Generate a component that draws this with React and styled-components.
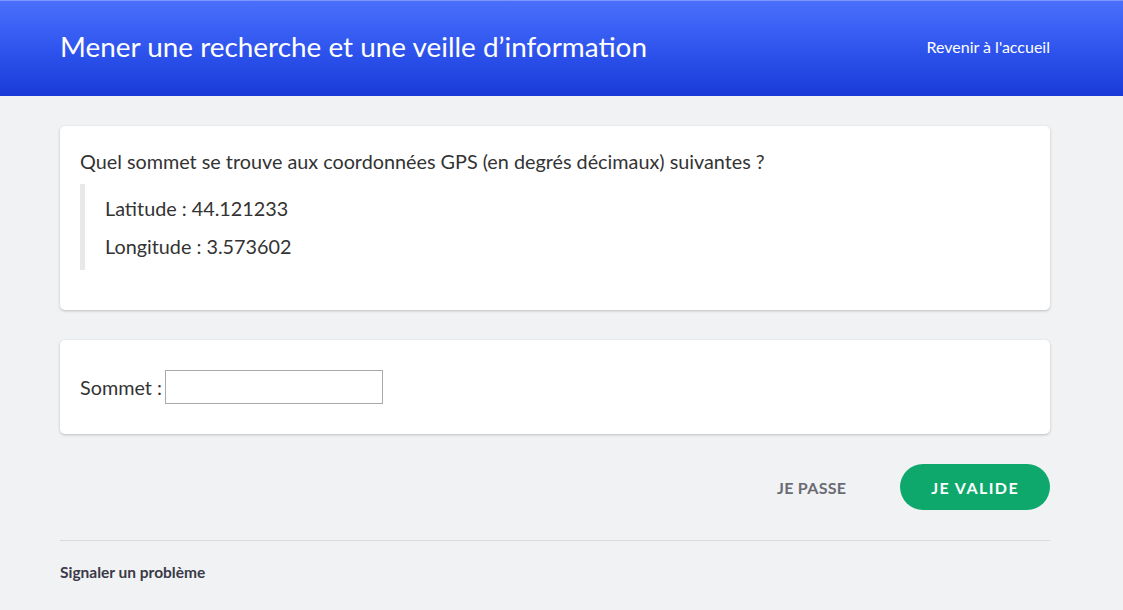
import styled, { createGlobalStyle } from "styled-components";

const GlobalStyle = createGlobalStyle`
  html, body {
    margin: 0;
    padding: 0;
    background: #f1f2f4;
    font-family: Lato, "Open Sans", sans-serif;
    color: #333;
  }
  * { box-sizing: border-box; }
`;

const Header = styled.header`
  height: 96px;
  background: linear-gradient(to bottom, #4a6ffc 0%, #2f55ee 50%, #1a3ad8 100%);
  border-top: 1px solid #7b96ff;
`;

const HeaderInner = styled.div`
  width: 990px;
  margin: 0 60px;
  height: 100%;
  display: flex;
  align-items: center;
  justify-content: space-between;
  padding-bottom: 5px;
`;

const Title = styled.h1`
  margin: 0;
  font-size: 27.9px;
  font-weight: 400;
  color: #fff;
`;

const HomeLink = styled.a`
  color: #fff;
  font-size: 16px;
  text-decoration: none;
  cursor: pointer;
`;

const Main = styled.main`
  width: 990px;
  margin: 0 60px;
  padding-top: 30px;
  display: flex;
  flex-direction: column;
  gap: 30px;
`;

const Card = styled.section`
  background: #fff;
  border-radius: 5px;
  box-shadow: 0 1px 3px rgba(0, 0, 0, 0.22);
  padding: ${(p) => p.$pad || "20px"};
`;

const Question = styled.p`
  margin: 0 0 8px;
  font-size: 19.8px;
  line-height: 30px;
`;

const Quote = styled.blockquote`
  margin: 0 0 20px;
  border-left: 5px solid #e8e8e8;
  padding: 9px 0 9px 20px;
`;

const QuoteLine = styled.p`
  margin: 0;
  font-size: 19.8px;
  line-height: 30px;

  & + & {
    margin-top: 8px;
  }
`;

const Field = styled.label`
  display: flex;
  align-items: center;
  gap: 3px;
  font-size: 19.8px;
`;

const Input = styled.input`
  width: 218px;
  height: 34px;
  border: 1px solid #a9a9a9;
  font-size: 16px;
  padding: 4px 6px;
`;

const Actions = styled.div`
  display: flex;
  justify-content: flex-end;
  align-items: center;
  gap: 23px;
`;

const Button = styled.button`
  font-family: Lato, sans-serif;
  font-weight: 700;
  font-size: 16px;
  text-transform: uppercase;
  border: none;
  cursor: pointer;
  height: 46px;
  border-radius: 23px;
  padding: 0 31px;
  background: ${(p) => (p.$primary ? "#0ea86c" : "transparent")};
  color: ${(p) => (p.$primary ? "#fff" : "#6b6b73")};
  letter-spacing: ${(p) => (p.$primary ? "1.4px" : "0.3px")};
`;

const Footer = styled.footer`
  border-top: 1px solid #d8dadd;
  padding-top: 22px;
  font-size: 15.5px;
  font-weight: 700;
  color: #3a3a48;
`;

const App = () => {
  return (
    <>
      <GlobalStyle />
      <Header>
        <HeaderInner>
          <Title>Mener une recherche et une veille d’information</Title>
          <HomeLink>Revenir à l'accueil</HomeLink>
        </HeaderInner>
      </Header>
      <Main>
        <Card>
          <Question>
            Quel sommet se trouve aux coordonnées GPS (en degrés décimaux) suivantes ?
          </Question>
          <Quote>
            <QuoteLine>Latitude : 44.121233</QuoteLine>
            <QuoteLine>Longitude : 3.573602</QuoteLine>
          </Quote>
        </Card>
        <Card $pad="30px 20px">
          <Field>
            Sommet : <Input type="text" />
          </Field>
        </Card>
        <Actions>
          <Button>Je passe</Button>
          <Button $primary>Je valide</Button>
        </Actions>
        <Footer>Signaler un problème</Footer>
      </Main>
    </>
  );
};

export default App;
